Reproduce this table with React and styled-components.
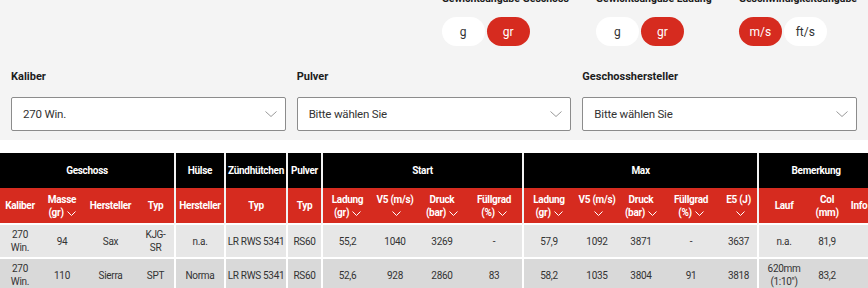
import React from 'react'
import styled, { createGlobalStyle } from 'styled-components'

const RED = '#d62b1f'
const FONT = 'Roboto, "Liberation Sans", sans-serif'

const GlobalStyle = createGlobalStyle`
  html, body {
    margin: 0;
    padding: 0;
    background: #fff;
    overflow: hidden;
  }
  body {
    font-family: ${FONT};
    color: #222;
  }
`

const FilterPanel = styled.section`
  background: #f4f4f4;
  margin-top: -8px;
  padding: 0 11px 9px;
`

const UnitBar = styled.div`
  display: flex;
  justify-content: flex-end;
  gap: 27px;
`

const UnitGroup = styled.div`
  display: flex;
  flex-direction: column;
  align-items: flex-start;
  gap: 12px;
`

const Label = styled.div`
  font-size: ${p => (p.$small ? '10.5px' : '11px')};
  font-weight: 700;
  line-height: 13px;
  color: #1c1c1c;
`

const Toggle = styled.div`
  display: flex;
  gap: 2px;
`

const Pill = styled.button`
  width: 43px;
  height: 29px;
  padding: 0;
  border: 0;
  border-radius: 15px;
  background: ${p => (p.$active ? RED : '#fff')};
  color: ${p => (p.$active ? '#fff' : '#333')};
  font-family: ${FONT};
  font-size: 12px;
`

const Filters = styled.div`
  display: grid;
  grid-template-columns: repeat(3, 1fr);
  gap: 11px;
  margin-top: 24px;
`

const Field = styled.div`
  display: flex;
  flex-direction: column;
  gap: 14px;
`

const Select = styled.div`
  height: 34px;
  box-sizing: border-box;
  display: flex;
  align-items: center;
  justify-content: space-between;
  padding: 0 8px 0 11px;
  background: #fff;
  border: 1px solid #8c8c8c;
  border-radius: 2px;
  font-size: 11.5px;
  letter-spacing: -0.2px;
  color: #333;
`

const DataTable = styled.table`
  margin-top: 13px;
  width: 873px;
  table-layout: fixed;
  border-collapse: separate;
  border-spacing: 0;
  font-size: 10px;
  letter-spacing: -0.3px;
`

const GroupHead = styled.th`
  height: 35px;
  padding: 0;
  background: #000;
  color: #fff;
  font-weight: 700;
  border-left: ${p => (p.$first ? '0' : '2px solid #f2f2f2')};
`

const SubHead = styled.th`
  height: 35px;
  padding: 0 1px;
  background: ${RED};
  color: #fff;
  font-weight: 700;
  line-height: 13px;
  white-space: nowrap;
  border-left: ${p => (p.$sep ? '2px solid #f2f2f2' : '0')};
  border-bottom: 2px solid #fff;
`

const Cell = styled.td`
  height: 32px;
  padding: 0 1px;
  text-align: center;
  line-height: 13px;
  white-space: nowrap;
  color: #333;
  background: ${p => (p.$alt ? '#d9d9d9' : '#e7e7e7')};
  border-left: ${p => (p.$sep ? '2px solid #fff' : '0')};
  border-bottom: 2px solid #fff;
`

const Chevron = ({ size = 12, color = '#999' }) => (
  <svg width={size} height={size / 2} viewBox="0 0 12 6" fill="none">
    <polyline points="0.5,0.5 6,5.5 11.5,0.5" stroke={color} strokeWidth="1" />
  </svg>
)

const SortIcon = () => (
  <svg width="9" height="5" viewBox="0 0 9 5" fill="none" style={{ marginLeft: 3 }}>
    <polyline points="0.5,0.5 4.5,4.5 8.5,0.5" stroke="#fff" strokeWidth="1" />
  </svg>
)

const units = [
  { label: 'Gewichtsangabe Geschoss', options: ['g', 'gr'], active: 1 },
  { label: 'Gewichtsangabe Ladung', options: ['g', 'gr'], active: 1 },
  { label: 'Geschwindigkeitsangabe', options: ['m/s', 'ft/s'], active: 0 },
]

const filters = [
  { label: 'Kaliber', value: '270 Win.' },
  { label: 'Pulver', value: 'Bitte wählen Sie' },
  { label: 'Geschosshersteller', value: 'Bitte wählen Sie' },
]

const widths = [40, 44, 53, 37, 50, 62, 35, 51, 46, 48, 56, 52, 46, 42, 58, 37, 52, 36, 28]
const separators = [4, 5, 6, 7, 11, 16]

const groups = [
  ['Geschoss', 4],
  ['Hülse', 1],
  ['Zündhütchen', 1],
  ['Pulver', 1],
  ['Start', 4],
  ['Max', 5],
  ['Bemerkung', 3],
]

const subHeads = [
  ['Kaliber'],
  ['Masse', '(gr)', true],
  ['Hersteller'],
  ['Typ'],
  ['Hersteller'],
  ['Typ'],
  ['Typ'],
  ['Ladung', '(gr)', true],
  ['V5 (m/s)', '', true],
  ['Druck', '(bar)', true],
  ['Füllgrad', '(%)', true],
  ['Ladung', '(gr)', true],
  ['V5 (m/s)', '', true],
  ['Druck', '(bar)', true],
  ['Füllgrad', '(%)', true],
  ['E5 (J)', '', true],
  ['Lauf'],
  ['Col', '(mm)'],
  ['Info'],
]

const rows = [
  [['270', 'Win.'], '94', 'Sax', ['KJG-', 'SR'], 'n.a.', 'LR RWS 5341', 'RS60', '55,2', '1040', '3269', '-', '57,9', '1092', '3871', '-', '3637', 'n.a.', '81,9', ''],
  [['270', 'Win.'], '110', 'Sierra', 'SPT', 'Norma', 'LR RWS 5341', 'RS60', '52,6', '928', '2860', '83', '58,2', '1035', '3804', '91', '3818', ['620mm', '(1:10")'], '83,2', ''],
]

const lines = v => (Array.isArray(v) ? v.map((l, i) => <div key={i}>{l}</div>) : v)

export default function App() {
  return (
    <>
      <GlobalStyle />
      <FilterPanel>
        <UnitBar>
          {units.map(u => (
            <UnitGroup key={u.label}>
              <Label $small>{u.label}</Label>
              <Toggle>
                {u.options.map((o, i) => (
                  <Pill key={o} $active={i === u.active}>{o}</Pill>
                ))}
              </Toggle>
            </UnitGroup>
          ))}
        </UnitBar>
        <Filters>
          {filters.map(f => (
            <Field key={f.label}>
              <Label>{f.label}</Label>
              <Select>
                <span>{f.value}</span>
                <Chevron />
              </Select>
            </Field>
          ))}
        </Filters>
      </FilterPanel>

      <DataTable>
        <colgroup>
          {widths.map((w, i) => <col key={i} style={{ width: w }} />)}
        </colgroup>
        <thead>
          <tr>
            {groups.map(([name, span], i) => (
              <GroupHead key={name} colSpan={span} $first={i === 0}>{name}</GroupHead>
            ))}
          </tr>
          <tr>
            {subHeads.map(([a, b, sort], i) => (
              <SubHead key={i} $sep={separators.includes(i)}>
                <div>{a}</div>
                {(b || sort) && (
                  <div>
                    {b}
                    {sort && <SortIcon />}
                  </div>
                )}
              </SubHead>
            ))}
          </tr>
        </thead>
        <tbody>
          {rows.map((r, ri) => (
            <tr key={ri}>
              {r.map((v, i) => (
                <Cell key={i} $alt={ri === 1} $sep={separators.includes(i)}>{lines(v)}</Cell>
              ))}
            </tr>
          ))}
        </tbody>
      </DataTable>
    </>
  )
}
